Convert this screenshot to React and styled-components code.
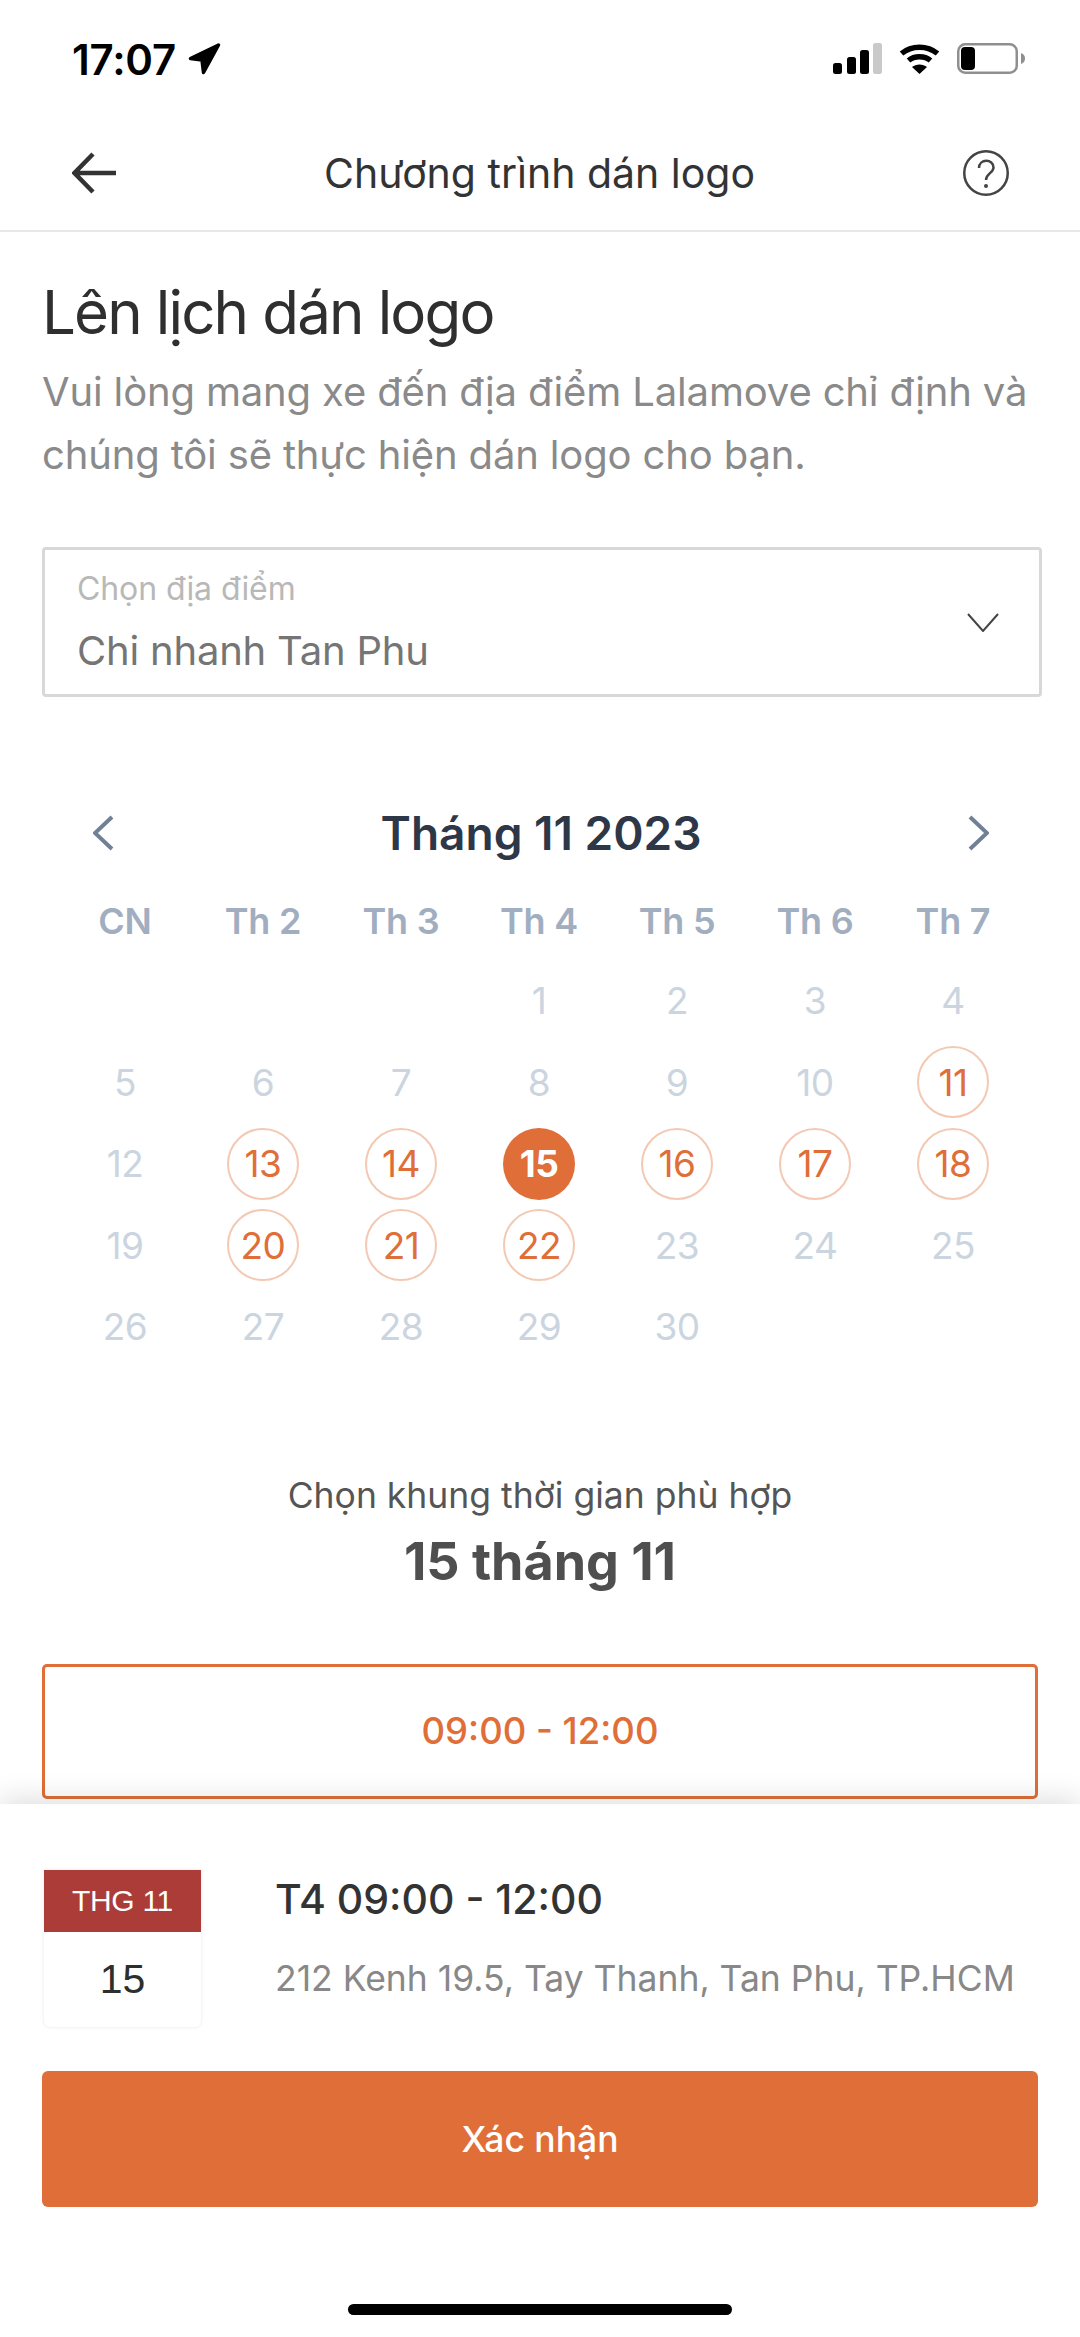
import React from 'react';
import styled, { createGlobalStyle } from 'styled-components';

const ORANGE = '#e06e38';

const GlobalStyle = createGlobalStyle`
  html, body {
    margin: 0;
    padding: 0;
    background: #fff;
  }
  * {
    box-sizing: border-box;
  }
`;

const Page = styled.div`
  width: 1080px;
  height: 2337px;
  display: flex;
  flex-direction: column;
  overflow: hidden;
  background: #fff;
  font-family: Inter, 'Noto Sans', sans-serif;
`;

const StatusBar = styled.div`
  height: 116px;
  flex: none;
  display: flex;
  align-items: center;
  justify-content: space-between;
  padding: 0 55px 0 72px;
`;

const Clock = styled.div`
  display: flex;
  align-items: center;
  gap: 12px;
  padding-top: 2px;
  font-size: 42px;
  font-weight: 600;
  letter-spacing: -0.2px;
  color: #000;
`;

const StatusIcons = styled.div`
  display: flex;
  align-items: center;
  gap: 17px;
`;

const NavBar = styled.div`
  height: 116px;
  flex: none;
  display: flex;
  align-items: center;
  justify-content: space-between;
  padding: 0 71px 0 72px;
  border-bottom: 2px solid #e8e8e8;
`;

const NavTitle = styled.div`
  font-size: 41px;
  font-weight: 400;
  color: #333;
`;

const Scroll = styled.div`
  flex: 1;
  min-height: 0;
  overflow: hidden;
  padding: 44px 42px 0;
`;

const Heading = styled.h1`
  margin: 0;
  font-size: 60px;
  line-height: 72px;
  font-weight: 400;
  letter-spacing: -1.85px;
  color: #2f2f2f;
`;

const Intro = styled.p`
  margin: 12px 0 0;
  font-size: 40px;
  line-height: 63px;
  font-weight: 400;
  letter-spacing: -0.15px;
  color: #8a8a8a;
`;

const Select = styled.div`
  margin-top: 61px;
  width: 1000px;
  height: 150px;
  display: flex;
  align-items: center;
  justify-content: space-between;
  padding: 0 40px 0 32px;
  border: 3px solid #d8d8d8;
  border-radius: 4px;
`;

const SelectLabel = styled.div`
  font-size: 32px;
  line-height: 40px;
  letter-spacing: -0.1px;
  color: #b8b8b8;
`;

const SelectValue = styled.div`
  margin-top: 18px;
  font-size: 40px;
  line-height: 48px;
  letter-spacing: -0.2px;
  color: #757575;
`;

const Calendar = styled.div`
  margin: 106px 0 0 14px;
  width: 966px;
`;

const MonthRow = styled.div`
  height: 60px;
  display: flex;
  align-items: center;
  justify-content: space-between;
  padding: 0 33px 0 37px;
`;

const MonthTitle = styled.div`
  font-size: 46px;
  font-weight: 600;
  color: #2d3748;
`;

const WeekGrid = styled.div`
  margin-top: 28px;
  display: grid;
  grid-template-columns: repeat(7, 1fr);
  font-size: 36px;
  line-height: 60px;
  font-weight: 600;
  letter-spacing: -0.2px;
  text-align: center;
  color: #a0aec0;
`;

const DayGrid = styled.div`
  margin-top: 9px;
  display: grid;
  grid-template-columns: repeat(7, 1fr);
  grid-auto-rows: 81.5px;
`;

const Day = styled.div`
  display: flex;
  align-items: center;
  justify-content: center;
`;

const DayNum = styled.div`
  width: 72px;
  height: 72px;
  display: flex;
  align-items: center;
  justify-content: center;
  border-radius: 50%;
  font-size: 37px;
  letter-spacing: -0.5px;
  border: 2px solid ${p => (p.$state === 'open' ? '#f3c9b3' : 'transparent')};
  background: ${p => (p.$state === 'selected' ? ORANGE : 'transparent')};
  font-weight: ${p => (p.$state === 'selected' ? 700 : 400)};
  color: ${p =>
    p.$state === 'selected' ? '#fff' : p.$state === 'open' ? ORANGE : '#cbd5e0'};
`;

const SlotHeader = styled.div`
  margin-top: 106px;
  text-align: center;
  font-size: 35.5px;
  line-height: 44px;
  color: #555;
`;

const SlotDate = styled.div`
  margin-top: 14px;
  text-align: center;
  font-size: 52px;
  line-height: 60px;
  font-weight: 700;
  color: #4f4f4f;
`;

const Slot = styled.div`
  margin-top: 72px;
  width: 996px;
  height: 135px;
  display: flex;
  align-items: center;
  justify-content: center;
  border: 3px solid ${ORANGE};
  border-radius: 5px;
  font-size: 36.5px;
  font-weight: 500;
  color: ${ORANGE};
`;

const Sheet = styled.div`
  flex: none;
  height: 533px;
  display: flex;
  flex-direction: column;
  background: #fff;
  padding: 66px 42px 0;
  box-shadow: 0 -4px 28px rgba(0, 0, 0, 0.14);
  position: relative;
`;

const SummaryRow = styled.div`
  display: flex;
  gap: 74px;
  height: 157px;
  padding-left: 2px;
`;

const DateBadge = styled.div`
  width: 157px;
  flex: none;
  display: flex;
  flex-direction: column;
  border-radius: 2px 2px 6px 6px;
  box-shadow: 0 0 0 1px #f6f6f6, 0 0 4px rgba(0, 0, 0, 0.08);
  font-family: 'Liberation Sans', Arial, sans-serif;
`;

const BadgeMonth = styled.div`
  height: 62px;
  display: flex;
  align-items: center;
  justify-content: center;
  background: #ab3c38;
  font-size: 30px;
  letter-spacing: -0.3px;
  color: #fff;
`;

const BadgeDay = styled.div`
  flex: 1;
  display: flex;
  align-items: center;
  justify-content: center;
  font-size: 41px;
  color: #2e2e2e;
`;

const SummaryText = styled.div`
  padding-top: 4px;
`;

const SummaryTime = styled.div`
  font-size: 41px;
  line-height: 50px;
  font-weight: 500;
  color: #333;
`;

const SummaryAddress = styled.div`
  margin-top: 30px;
  font-size: 35.5px;
  line-height: 50px;
  color: #888;
`;

const ConfirmButton = styled.button`
  margin-top: 44px;
  width: 996px;
  height: 136px;
  flex: none;
  border: 0;
  border-radius: 6px;
  background: ${ORANGE};
  font-family: inherit;
  font-size: 35.5px;
  font-weight: 500;
  color: #fff;
`;

const HomeBar = styled.div`
  width: 384px;
  height: 11px;
  margin: 97px auto 0;
  flex: none;
  border-radius: 6px;
  background: #000;
`;

const LocationArrow = () => (
  <svg width="33" height="32" viewBox="0 0 33 32">
    <path
      d="M30.5 2 L2.5 15.5 L14 17 L15.5 29.5 Z"
      fill="#000"
      stroke="#000"
      strokeWidth="3.5"
      strokeLinejoin="round"
    />
  </svg>
);

const SignalIcon = () => (
  <svg width="49" height="31" viewBox="0 0 49 31">
    <rect x="0" y="20" width="9" height="11" rx="2.5" fill="#000" />
    <rect x="14" y="14" width="9" height="17" rx="2.5" fill="#000" />
    <rect x="27" y="7" width="9" height="24" rx="2.5" fill="#000" />
    <rect x="40" y="0" width="9" height="31" rx="2.5" fill="#c9c9c9" />
  </svg>
);

const WifiIcon = () => (
  <svg width="41" height="31" viewBox="0 0 41 31">
    <path d="M2.5 10.5 C12.5 2 28.5 2 38.5 10.5" fill="none" stroke="#000" strokeWidth="5.5" />
    <path d="M9.5 17.5 C15.5 12.5 25.5 12.5 31.5 17.5" fill="none" stroke="#000" strokeWidth="5.5" />
    <path d="M13 24 L20.5 31 L28 24 C24 20.5 17 20.5 13 24 Z" fill="#000" />
  </svg>
);

const BatteryIcon = () => (
  <svg width="68" height="31" viewBox="0 0 68 31">
    <rect x="1.25" y="1.25" width="58.5" height="28.5" rx="7" fill="none" stroke="#8f8f8f" strokeWidth="2.5" />
    <rect x="4" y="4" width="14" height="23" rx="4" fill="#000" />
    <path d="M64 10 C67 11 68 13 68 15.5 C68 18 67 20 64 21 Z" fill="#8f8f8f" />
  </svg>
);

const BackIcon = () => (
  <svg width="44" height="42" viewBox="0 0 44 42">
    <path d="M21 2 L2.5 21 L21 40 M3 21 H44" fill="none" stroke="#333" strokeWidth="4.5" />
  </svg>
);

const HelpIcon = () => (
  <svg width="46" height="46" viewBox="0 0 46 46">
    <circle cx="23" cy="23" r="21.75" fill="none" stroke="#444" strokeWidth="2.5" />
    <path
      d="M16 18 C16 8.5 30.5 8.5 30.5 17.5 C30.5 23 23 23.5 23 30"
      fill="none"
      stroke="#444"
      strokeWidth="2.5"
    />
    <circle cx="23" cy="36" r="2" fill="#444" />
  </svg>
);

const ChevronDown = () => (
  <svg width="32" height="19" viewBox="0 0 32 19">
    <path d="M1 1 L16 18 L31 1" fill="none" stroke="#444" strokeWidth="2" />
  </svg>
);

const MonthChevron = ({ flip }) => (
  <svg width="21" height="36" viewBox="0 0 21 36">
    <path
      d={flip ? 'M2 2 L19 18 L2 34' : 'M19 2 L2 18 L19 34'}
      fill="none"
      stroke="#718096"
      strokeWidth="4"
    />
  </svg>
);

const WEEKDAYS = ['CN', 'Th 2', 'Th 3', 'Th 4', 'Th 5', 'Th 6', 'Th 7'];
const OPEN_DAYS = [11, 13, 14, 16, 17, 18, 20, 21, 22];
const SELECTED_DAY = 15;

// november 2023 starts on a wednesday
const cells = [null, null, null];
for (let d = 1; d <= 30; d++) cells.push(d);

const dayState = d => {
  if (d === SELECTED_DAY) return 'selected';
  return OPEN_DAYS.includes(d) ? 'open' : 'closed';
};

export default function App() {
  return (
    <Page>
      <GlobalStyle />
      <StatusBar>
        <Clock>
          17:07
          <LocationArrow />
        </Clock>
        <StatusIcons>
          <SignalIcon />
          <WifiIcon />
          <BatteryIcon />
        </StatusIcons>
      </StatusBar>
      <NavBar>
        <BackIcon />
        <NavTitle>Chương trình dán logo</NavTitle>
        <HelpIcon />
      </NavBar>
      <Scroll>
        <Heading>Lên lịch dán logo</Heading>
        <Intro>
          Vui lòng mang xe đến địa điểm Lalamove chỉ định và
          <br />
          chúng tôi sẽ thực hiện dán logo cho bạn.
        </Intro>
        <Select>
          <div>
            <SelectLabel>Chọn địa điểm</SelectLabel>
            <SelectValue>Chi nhanh Tan Phu</SelectValue>
          </div>
          <ChevronDown />
        </Select>
        <Calendar>
          <MonthRow>
            <MonthChevron />
            <MonthTitle>Tháng 11 2023</MonthTitle>
            <MonthChevron flip />
          </MonthRow>
          <WeekGrid>
            {WEEKDAYS.map(w => (
              <div key={w}>{w}</div>
            ))}
          </WeekGrid>
          <DayGrid>
            {cells.map((d, i) => (
              <Day key={i}>{d && <DayNum $state={dayState(d)}>{d}</DayNum>}</Day>
            ))}
          </DayGrid>
        </Calendar>
        <SlotHeader>Chọn khung thời gian phù hợp</SlotHeader>
        <SlotDate>15 tháng 11</SlotDate>
        <Slot>09:00 - 12:00</Slot>
      </Scroll>
      <Sheet>
        <SummaryRow>
          <DateBadge>
            <BadgeMonth>THG 11</BadgeMonth>
            <BadgeDay>15</BadgeDay>
          </DateBadge>
          <SummaryText>
            <SummaryTime>T4 09:00 - 12:00</SummaryTime>
            <SummaryAddress>212 Kenh 19.5, Tay Thanh, Tan Phu, TP.HCM</SummaryAddress>
          </SummaryText>
        </SummaryRow>
        <ConfirmButton>Xác nhận</ConfirmButton>
        <HomeBar />
      </Sheet>
    </Page>
  );
}
